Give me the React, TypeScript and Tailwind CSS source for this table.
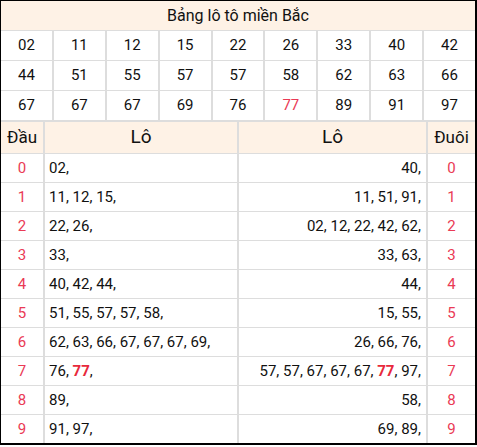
const TOP = [
  "02", "11", "12", "15", "22", "26", "33", "40", "42",
  "44", "51", "55", "57", "57", "58", "62", "63", "66",
  "67", "67", "67", "69", "76", "77", "89", "91", "97",
];

const DAU = [
  ["02"],
  ["11", "12", "15"],
  ["22", "26"],
  ["33"],
  ["40", "42", "44"],
  ["51", "55", "57", "57", "58"],
  ["62", "63", "66", "67", "67", "67", "69"],
  ["76", "77"],
  ["89"],
  ["91", "97"],
];

const DUOI = [
  ["40"],
  ["11", "51", "91"],
  ["02", "12", "22", "42", "62"],
  ["33", "63"],
  ["44"],
  ["15", "55"],
  ["26", "66", "76"],
  ["57", "57", "67", "67", "67", "77", "97"],
  ["58"],
  ["69", "89"],
];

const SPECIAL = "77";

function LoList({ items }: { items: string[] }) {
  return (
    <span>
      {items.map((n, i) => (
        <span key={i}>
          {n === SPECIAL ? (
            <span className="font-bold text-[#e8293c]">{n}</span>
          ) : (
            n
          )}
          {i < items.length - 1 ? ", " : ","}
        </span>
      ))}
    </span>
  );
}

export default function App() {
  return (
    <div
      className="w-[477px] border-t border-l border-r-2 border-b-2 border-black bg-white text-[#111]"
      style={{ fontFamily: "Roboto, 'Noto Sans', sans-serif" }}
    >
      <div className="flex flex-col gap-y-px bg-[#dddddd]">
        <div className="flex h-[29px] items-center justify-center bg-[#fef2e6] text-[16px]">
          Bảng lô tô miền Bắc
        </div>
        <div className="grid grid-cols-9 gap-x-[2px] gap-y-px">
          {TOP.map((n, i) => (
            <div
              key={i}
              className={`flex h-[29px] items-center justify-center bg-white text-[15px] ${
                n === SPECIAL ? "text-[#ea3a55]" : ""
              }`}
            >
              {n}
            </div>
          ))}
        </div>
        <div className="mt-px grid grid-cols-[42px_192px_187px_47px] gap-x-[2px] gap-y-px">
          <div className="flex h-[31px] items-center justify-center bg-[#fef2e6] text-[17px]">
            Đầu
          </div>
          <div className="flex h-[31px] items-center justify-center bg-[#fef2e6] text-[19px]">
            Lô
          </div>
          <div className="flex h-[31px] items-center justify-center bg-[#fef2e6] text-[19px]">
            Lô
          </div>
          <div className="flex h-[31px] items-center justify-center bg-[#fef2e6] text-[17px]">
            Đuôi
          </div>
          {DAU.map((items, d) => (
            <div key={d} className="contents">
              <div className="flex h-[28px] items-center justify-center bg-white text-[15px] text-[#ea3a55]">
                {d}
              </div>
              <div className="flex h-[28px] items-center bg-white pl-[4px] text-[15px] whitespace-nowrap">
                <LoList items={items} />
              </div>
              <div className="flex h-[28px] items-center justify-end bg-white pr-[5px] text-[15px] whitespace-nowrap">
                <LoList items={DUOI[d]} />
              </div>
              <div className="flex h-[28px] items-center justify-center bg-white text-[15px] text-[#ea3a55]">
                {d}
              </div>
            </div>
          ))}
        </div>
      </div>
    </div>
  );
}
